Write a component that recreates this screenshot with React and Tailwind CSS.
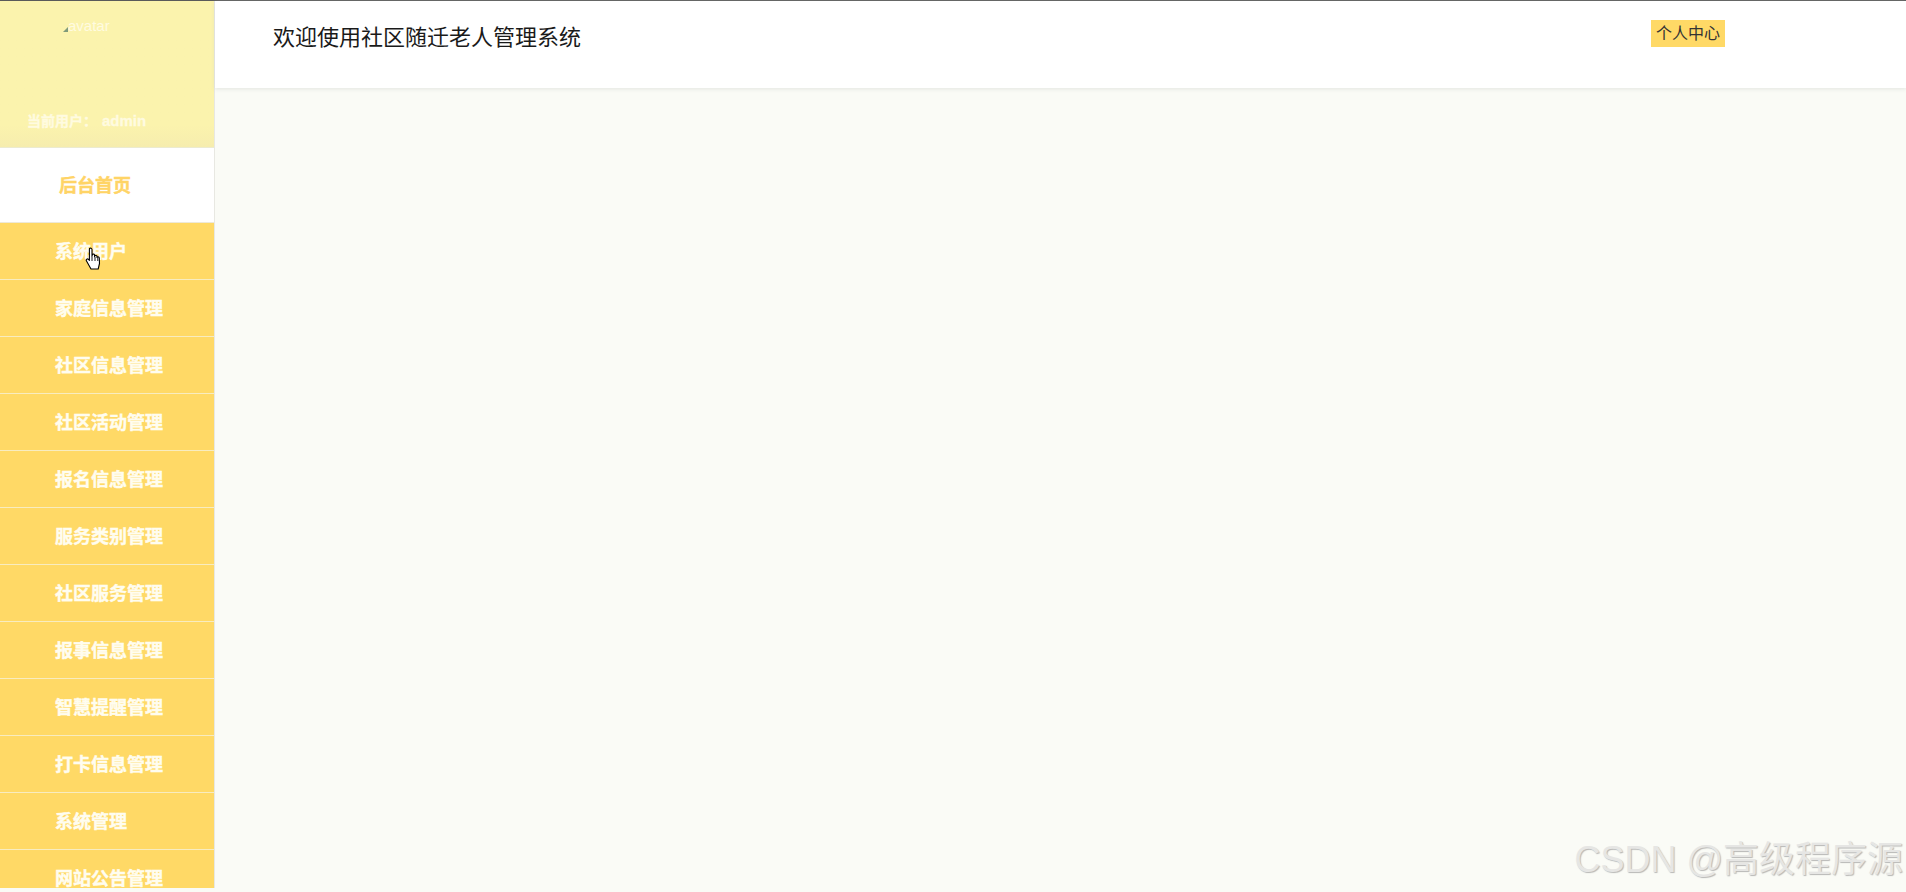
import React from 'react';

const menuItems = [
  '系统用户',
  '家庭信息管理',
  '社区信息管理',
  '社区活动管理',
  '报名信息管理',
  '服务类别管理',
  '社区服务管理',
  '报事信息管理',
  '智慧提醒管理',
  '打卡信息管理',
  '系统管理',
  '网站公告管理',
];

const fontStack = { fontFamily: '"Liberation Sans", "Noto Sans CJK SC", sans-serif' };

// pointer cursor sitting on top of the first menu item
const HandCursor = () => (
  <svg className="absolute left-[85px] top-[247px]" width="18" height="24" viewBox="0 0 18 24">
    <path
      d="M4.500 1.500c1-.8 2.300-.3 2.500 1v7l.4-2c.9-.8 2-.4 2.200.6v1.600l.3-1c.9-.6 2-.2 2.100.8v1l.3-.4c.9-.5 1.900 0 2 1l.2 5.400-1.300 5.500H6L1.500 14c-.8-1.200.6-2.700 1.900-1.700l1 1V2.500z"
      fill="#ffffff"
      stroke="#000000"
      strokeWidth="1.100"
      strokeLinejoin="round"
    />
    <path d="M7 10v4M10 10v4M12.800 10.500V14" stroke="#000000" strokeWidth="0.900" fill="none" />
  </svg>
);

export default function App() {
  return (
    <div className="relative h-[892px] w-full overflow-hidden bg-[#fafbf6]" style={fontStack}>
      <div className="h-px bg-[#5a5a5a]" />
      <div className="flex h-[891px]">
        <aside className="flex h-[887px] w-[215px] shrink-0 flex-col overflow-hidden border-r border-[#e8e8e2]">
          <div className="h-[147px] shrink-0 border-b border-[#ecebd0] bg-gradient-to-b from-[#fbf3ad] from-85% to-[#f6edae]">
            <div className="flex items-start pt-[16px] pl-[63px] text-[15px] leading-[18px] text-[#fffbe0]">
              <span className="mt-[10px] h-0 w-0 border-b-[5px] border-l-[5px] border-b-[#7f9a7a] border-l-transparent" />
              <span>avatar</span>
            </div>
            <div className="mt-[76px] pl-[27px] text-sm leading-[20px] font-bold text-[#fffbe0] [-webkit-text-stroke:0.3px_#fffbe0]">
              当前用户： <span className="ml-[1px] text-[15px]">admin</span>
            </div>
          </div>
          <div className="flex h-[75px] shrink-0 items-center border-b border-[#eee9d8] bg-white pt-[2px] pl-[59px] text-lg font-bold text-[#ffd466] [-webkit-text-stroke:0.4px_#ffd466]">
            后台首页
          </div>
          {menuItems.map((item) => (
            <div
              key={item}
              className="flex h-[57px] shrink-0 items-center border-b border-[#f8ecc0] bg-[#ffd966] pt-[2px] pl-[55px] text-lg font-bold text-[#fffdf0] [-webkit-text-stroke:0.4px_#fffdf0]"
            >
              {item}
            </div>
          ))}
        </aside>
        <div className="min-w-0 flex-1">
          <header className="flex h-[87px] items-start bg-white shadow-[0_1px_4px_rgba(200,205,200,0.45)]">
            <h1 className="mt-[21px] ml-[58px] text-[22px] leading-[32px] font-normal text-[#1a1a1a]">
              欢迎使用社区随迁老人管理系统
            </h1>
            <button className="mt-[19px] mr-[181px] ml-auto h-[27px] bg-[#ffd966] px-[5px] text-base leading-[27px] text-[#333333]">
              个人中心
            </button>
          </header>
        </div>
      </div>
      <HandCursor />
      {/* watermark */}
      <div className="absolute right-[3px] bottom-[9px] text-[36px] leading-[46px] whitespace-nowrap text-[#e6e6e4] [text-shadow:1px_1px_1px_rgba(140,140,140,0.6)]">
        CSDN @高级程序源
      </div>
    </div>
  );
}
